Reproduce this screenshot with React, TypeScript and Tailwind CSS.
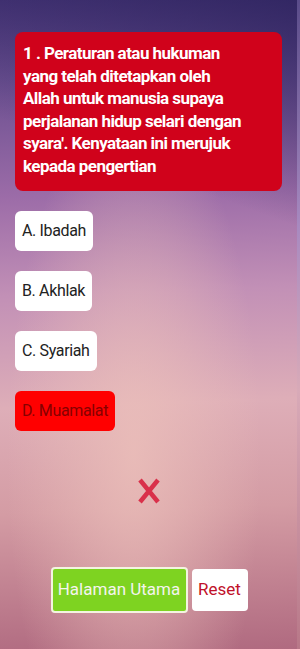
import React from 'react';

const options = [
  { label: 'A. Ibadah', wrong: false },
  { label: 'B. Akhlak', wrong: false },
  { label: 'C. Syariah', wrong: false },
  { label: 'D. Muamalat', wrong: true },
];

const questionLines = [
  '1 . Peraturan atau hukuman',
  'yang telah ditetapkan oleh',
  'Allah untuk manusia supaya',
  'perjalanan hidup selari dengan',
  "syara'. Kenyataan ini merujuk",
  'kepada pengertian',
];

// Option button in the answer list
const Option = ({ label, wrong }: { label: string; wrong: boolean }) => (
  <div
    className={`h-10 px-[7px] flex items-center rounded-md text-[16px] tracking-[-0.35px] ${
      wrong ? 'bg-[#ff0000] text-[#850000]' : 'bg-white text-[#222]'
    }`}
  >
    {label}
  </div>
);

export default function App() {
  return (
    <div className="w-[300px] h-[649px] flex overflow-hidden font-['Roboto',sans-serif]">
      <div className="w-[297px] h-full flex flex-col bg-[linear-gradient(200deg,rgba(40,32,90,0.75)_0%,rgba(40,32,90,0)_30%),radial-gradient(ellipse_at_45%_70%,rgba(236,192,186,0.8)_0%,rgba(236,192,186,0)_55%),linear-gradient(178deg,#4e3a7e_0%,#6a4f90_12%,#9c6ca8_30%,#c290b6_45%,#deaeb8_62%,#d49ca4_78%,#b06a80_100%)]">
        <div className="mt-8 mx-[15px] h-[159px] rounded-lg bg-[#d0021b] pl-2 pt-[10px]">
          <p className="text-white text-[17px] leading-[22.6px] font-bold tracking-[-0.55px] whitespace-nowrap">
            {questionLines.map((l) => (
              <span key={l} className="block">{l}</span>
            ))}
          </p>
        </div>

        <div className="mt-5 ml-[15px] flex flex-col items-start gap-5">
          {options.map((o) => (
            <Option key={o.label} label={o.label} wrong={o.wrong} />
          ))}
        </div>

        <div className="mt-[46px] flex justify-center">
          <svg width="24" height="28" viewBox="0 0 24 28">
            <path d="M3 3 L21 25 M21 3 L3 25" stroke="#d9304a" strokeWidth="4.5" strokeLinecap="butt" />
          </svg>
        </div>

        <div className="mt-[62px] flex justify-center items-center gap-1 pl-[1px]">
          <div className="w-[137px] h-[46px] flex items-center justify-center rounded bg-[#7ed321] border-2 border-[#f4f4e0] text-[#f4f4ee] text-[17px]">
            Halaman Utama
          </div>
          <div className="w-[56px] h-[42px] flex items-center justify-center rounded bg-white text-[#c0112a] text-[17px]">
            Reset
          </div>
        </div>
      </div>
      <div className="w-[3px] h-full bg-[linear-gradient(180deg,#5a4c8a_0%,#a88ac0_35%,#d8aab8_60%,#b87888_100%)]" />
    </div>
  );
}
